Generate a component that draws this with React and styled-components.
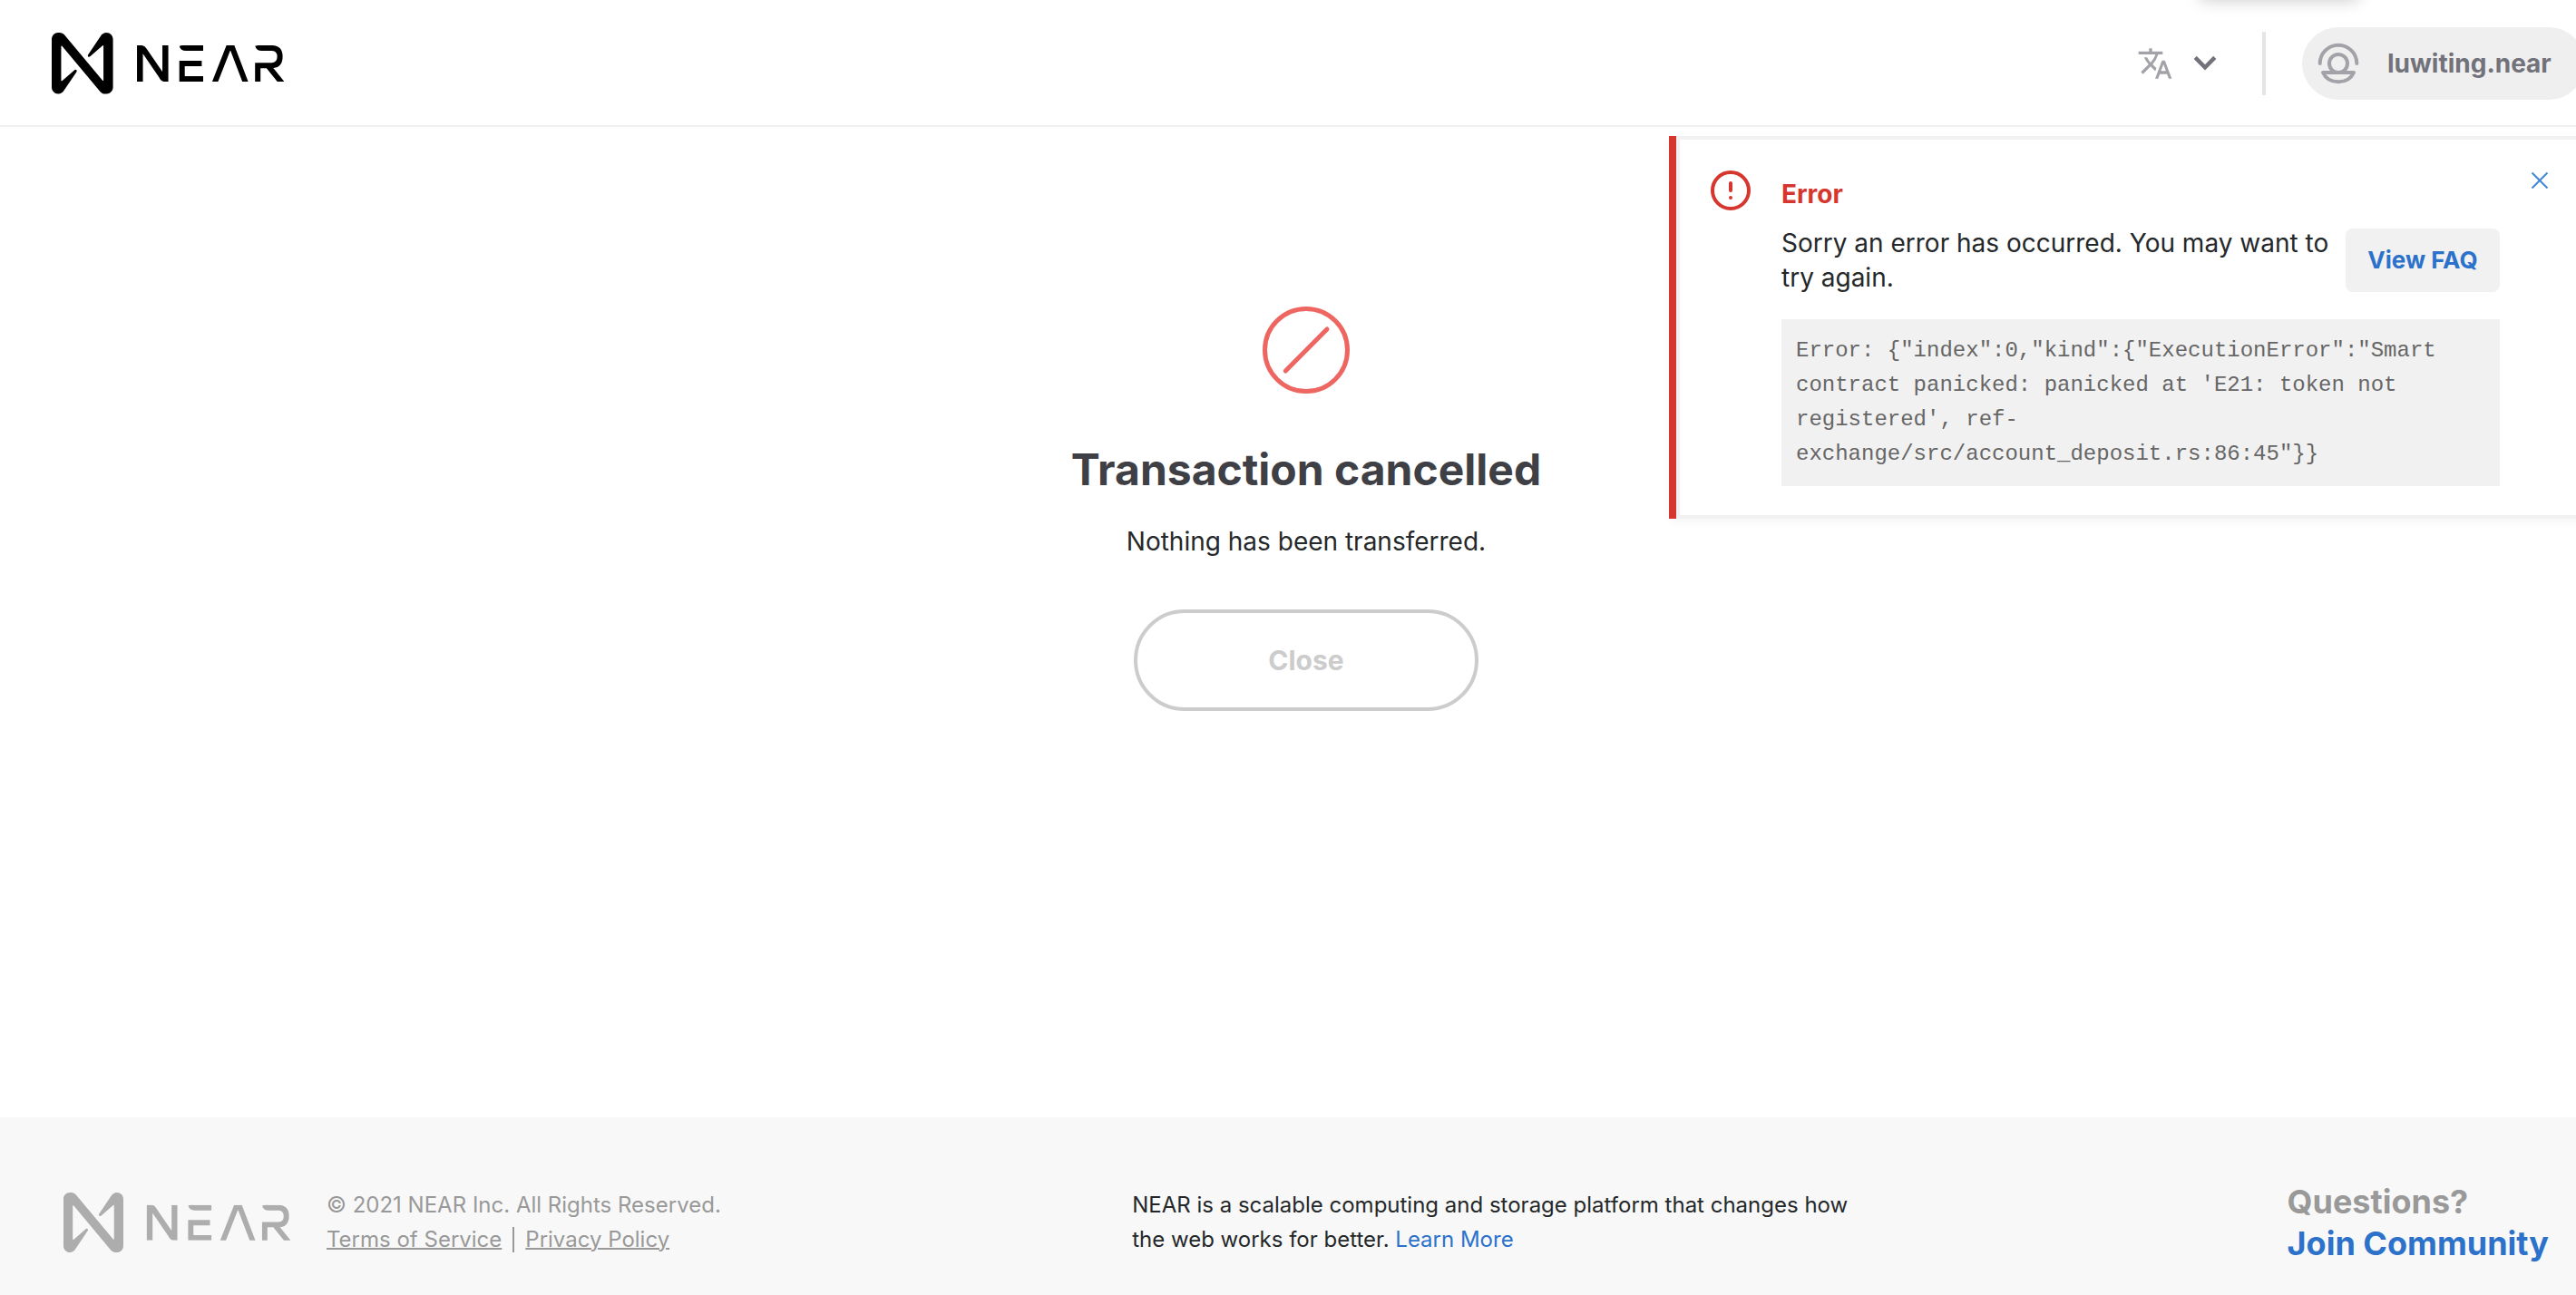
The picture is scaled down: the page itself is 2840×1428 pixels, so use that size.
import React from "react";
import styled, { createGlobalStyle } from "styled-components";
import { MdTranslate } from "react-icons/md";

const GlobalStyle = createGlobalStyle`
  *, *::before, *::after { box-sizing: border-box; }
  body {
    margin: 0;
    background: #fff;
    color: #25282a;
    font-family: Inter, "Liberation Sans", sans-serif;
    font-size: 28px;
    line-height: 38px;
    overflow-x: clip;
  }
  h1, h2, p { margin: 0; }
  button { font-family: inherit; cursor: pointer; }
  svg { display: block; flex: none; }
`;

/* The shell is slightly wider than the window and runs off its right edge. */
const Shell = styled.div`
  position: relative;
  width: calc(100% + 40px);
  min-height: 100vh;
  display: flex;
  flex-direction: column;
`;

const TopShade = styled.div`
  position: absolute;
  top: -20px;
  right: 280px;
  width: 174px;
  height: 18px;
  box-shadow: 0 2px 18px rgba(0, 0, 0, 0.22);
`;

const Header = styled.header`
  display: flex;
  align-items: center;
  justify-content: space-between;
  height: 140px;
  padding: 2px 30px 0 57px;
  border-bottom: 2px solid #f0f0f1;
`;

const LogoLink = styled.a`
  display: block;
  color: ${(p) => (p.$muted ? "#adadad" : "#000")};
`;

const HeaderTools = styled.div`
  display: flex;
  align-items: center;
`;

const LanguageButton = styled.button`
  display: flex;
  align-items: center;
  gap: 22px;
  padding: 0;
  border: 0;
  background: none;
  color: #a2a2a8;
`;

const Divider = styled.div`
  width: 4px;
  height: 70px;
  margin: 0 40px 0 50px;
  background: #e5e5e6;
`;

const AccountButton = styled.button`
  display: flex;
  align-items: center;
  gap: 30px;
  height: 80px;
  width: 312px;
  padding: 0 16px;
  border: 0;
  border-radius: 40px;
  background: #efefef;
  color: #72727a;
  font-size: 28px;
  font-weight: 700;
`;

const Main = styled.main`
  flex: 1;
  display: flex;
  flex-direction: column;
  align-items: center;
  padding: 198px 40px 60px;
`;

const Title = styled.h1`
  margin-top: 54px;
  font-size: 48px;
  line-height: 60px;
  font-weight: 700;
  color: #3f4045;
`;

const Summary = styled.p`
  margin-top: 30px;
`;

const CloseButton = styled.button`
  width: 380px;
  height: 112px;
  margin-top: 56px;
  border: 4px solid #ccc;
  border-radius: 56px;
  background: #fff;
  color: #ccc;
  font-size: 30px;
  font-weight: 700;
`;

const Alert = styled.section`
  position: absolute;
  top: 150px;
  right: 0;
  width: 1040px;
  display: flex;
  align-items: flex-start;
  padding: 38px 70px 36px 38px;
  border-left: 8px solid #d5372f;
  background: #fff;
  box-shadow: inset 0 0 0 4px #f1f1f1, 0 4px 10px rgba(0, 0, 0, 0.04);
`;

const AlertBody = styled.div`
  flex: 1;
  margin: 7px 34px 0;
`;

const AlertTitle = styled.h2`
  font-size: 28px;
  line-height: 38px;
  font-weight: 700;
  color: #d5372f;
`;

const AlertRow = styled.div`
  display: flex;
  align-items: center;
  gap: 16px;
  margin: 16px 0 27px;
`;

const AlertText = styled.p`
  flex: 1;
`;

const FaqLink = styled.a`
  display: flex;
  align-items: center;
  justify-content: center;
  width: 170px;
  height: 70px;
  border-radius: 8px;
  background: #f1f1f1;
  color: #2c72ca;
  font-size: 26px;
  font-weight: 700;
  text-decoration: none;
`;

const ErrorDetail = styled.code`
  display: block;
  padding: 16px;
  background: #f1f1f1;
  color: #666;
  font-family: "Liberation Mono", monospace;
  font-size: 24px;
  line-height: 38px;
`;

const DismissButton = styled.button`
  padding: 0;
  border: 0;
  background: none;
  color: #4387d6;
`;

const Footer = styled.footer`
  display: flex;
  align-items: center;
  justify-content: space-between;
  padding: 70px 70px 34px;
  background: #f8f8f8;
  font-size: 24px;
  line-height: 38px;
`;

const Legal = styled.div`
  display: flex;
  align-items: center;
  gap: 40px;
  color: #999;
`;

const LegalLinks = styled.div`
  display: flex;
  align-items: center;
`;

const LegalLink = styled.a`
  color: inherit;
  text-decoration: underline;
  text-decoration-thickness: 2px;
`;

const LegalDivider = styled.span`
  width: 2px;
  height: 28px;
  margin: 0 12px;
  background: #999;
`;

const About = styled.p`
  width: 820px;
`;

const TextLink = styled.a`
  color: #2c72ca;
  text-decoration: none;
`;

const Questions = styled.div`
  color: #999;
  font-size: 36px;
  line-height: 46px;
  font-weight: 700;
`;

function NearLogo({ width }) {
  return (
    <svg width={width} viewBox="0 0 256 68" fill="none" stroke="currentColor" role="img" aria-label="NEAR">
      <path
        transform="scale(0.75)"
        fill="currentColor"
        stroke="none"
        d="M72.2,4.6L53.4,32.5c-1.3,1.9,1.2,4.2,3,2.6L74.9,19c0.5-0.4,1.2-0.1,1.2,0.6v50.3c0,0.7-0.9,1-1.3,0.5l-56-67C17,1.2,14.4,0,11.5,0h-2C4.3,0,0,4.3,0,9.6v70.8C0,85.7,4.3,90,9.6,90c3.3,0,6.4-1.7,8.2-4.6l18.8-27.9c1.3-1.9-1.2-4.2-3-2.6l-18.5,16c-0.5,0.4-1.2,0.1-1.2-0.6V20.1c0-0.7,0.9-1,1.3-0.5l56,67c1.8,2.2,4.5,3.4,7.3,3.4h2c5.3,0,9.6-4.3,9.6-9.6V9.6c0-5.3-4.3-9.6-9.6-9.6C77.1,0,74,1.7,72.2,4.6z"
      />
      <svg x="0" y="14" width="256" height="40" viewBox="0 14 256 40" strokeWidth="6">
        <path d="M97.3 54V17.2H98.6Q100.4 17.2 101.6 19L121.2 47.6Q122.6 50.8 124.6 50.8H125.3V14" strokeWidth="6.5" />
        <path d="M143.7 14Q144.4 17.1 148 17.1H167" />
        <path d="M165.4 34H143.7V51.1H167" />
        <path d="M178.6 58L194.7 17H199.3L214.9 58" />
        <path d="M227.2 14Q228 17.1 231.5 17.1H243Q251.600 17.4 251.600 26.600Q251.600 35.9 243 36.2H227.2V56M238.6 36.6L255.8 58" />
      </svg>
    </svg>
  );
}

function AccountIcon() {
  return (
    <svg width="48" height="48" viewBox="0 0 48 48" fill="none" stroke="#a2a2a8" strokeWidth="4" strokeLinecap="round" strokeLinejoin="round" aria-hidden="true">
      <path d="M3.7 24a20.3 20.3 0 0 1 40.6 0" />
      <circle cx="24" cy="24" r="10" />
      <path d="M7 34h34C38 40.500 31.500 44.300 24 44.300S10 40.500 7 34z" />
    </svg>
  );
}

export default function App() {
  return (
    <>
      <GlobalStyle />
      <Shell>
        <TopShade />
        <Header>
          <LogoLink href="#home">
            <NearLogo width={256} />
          </LogoLink>
          <HeaderTools>
            <LanguageButton type="button" aria-label="Language">
              <MdTranslate size={40} />
              <svg width="26" height="18" viewBox="0 0 26 18" fill="none" stroke="#72727a" strokeWidth="4.400" aria-hidden="true">
                <path d="M2.200 2.400L13 13.400L23.800 2.400" />
              </svg>
            </LanguageButton>
            <Divider />
            <AccountButton type="button">
              <AccountIcon />
              luwiting.near
            </AccountButton>
          </HeaderTools>
        </Header>

        <Main>
          <svg width="96" height="96" viewBox="0 0 96 96" fill="none" stroke="#ee6661" strokeWidth="5" strokeLinecap="round" aria-hidden="true">
            <circle cx="48" cy="48" r="45.500" />
            <path d="M25.300 71L71 25" />
          </svg>
          <Title>Transaction cancelled</Title>
          <Summary>Nothing has been transferred.</Summary>
          <CloseButton type="button">Close</CloseButton>
        </Main>

        <Alert role="alert">
          <svg width="44" height="44" viewBox="0 0 44 44" fill="none" stroke="#d5372f" strokeWidth="4" strokeLinecap="round" aria-hidden="true">
            <circle cx="22" cy="22" r="20" />
            <path d="M22 14v8M22 30v.100" />
          </svg>
          <AlertBody>
            <AlertTitle>Error</AlertTitle>
            <AlertRow>
              <AlertText>Sorry an error has occurred. You may want to try again.</AlertText>
              <FaqLink href="#faq">View FAQ</FaqLink>
            </AlertRow>
            <ErrorDetail>
              {`Error: {"index":0,"kind":{"ExecutionError":"Smart contract panicked: panicked at 'E21: token not registered', ref-exchange/src/account_deposit.rs:86:45"}}`}
            </ErrorDetail>
          </AlertBody>
          <DismissButton type="button" aria-label="Dismiss">
            <svg width="20" height="20" viewBox="0 0 20 20" fill="none" stroke="currentColor" strokeWidth="2" aria-hidden="true">
              <path d="M1.500 2.500l17 17M18.500 2.500l-17 17" />
            </svg>
          </DismissButton>
        </Alert>

        <Footer>
          <Legal>
            <LogoLink href="#home" $muted>
              <NearLogo width={250} />
            </LogoLink>
            <div>
              <p>© 2021 NEAR Inc. All Rights Reserved.</p>
              <LegalLinks>
                <LegalLink href="#terms">Terms of Service</LegalLink>
                <LegalDivider />
                <LegalLink href="#privacy">Privacy Policy</LegalLink>
              </LegalLinks>
            </div>
          </Legal>
          <About>
            NEAR is a scalable computing and storage platform that changes how the web works for better.{" "}
            <TextLink href="#learn">Learn More</TextLink>
          </About>
          <Questions>
            <div>Questions?</div>
            <TextLink href="#community">Join Community</TextLink>
          </Questions>
        </Footer>
      </Shell>
    </>
  );
}
